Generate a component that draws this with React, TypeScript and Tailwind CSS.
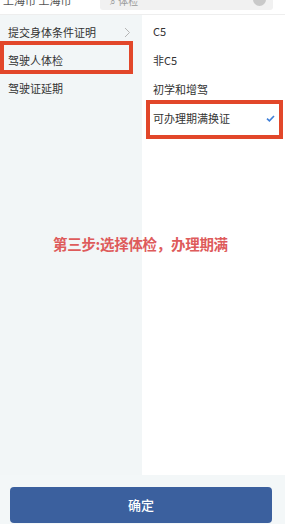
export default function App() {
  return (
    <div
      className="relative w-[300px] h-[524px] bg-white overflow-hidden"
      style={{ fontFamily: '"Noto Sans CJK SC", "Noto Sans", sans-serif' }}
    >
      <div className="w-[285px] h-full flex flex-col">
        {/* header, mostly scrolled off */}
        <div className="h-[15px] overflow-hidden border-b border-[#eeeeee]">
          <div className="-mt-[10px] h-[20px] flex items-center">
            <span className="pl-[3px] text-[11px] text-[#555] w-[100px]">上海市 上海市</span>
            <div className="flex-1 mr-[12px] h-[20px] rounded-[3px] bg-[#f1f1f1] flex items-center px-[10px] relative">
              <span className="text-[10px] text-[#999]">⌕ 体检</span>
              <span className="absolute right-[7px] top-[3px] w-[13px] h-[13px] rounded-full bg-[#c9c9c9]" />
            </div>
          </div>
        </div>

        <div className="flex-1 flex">
          {/* left menu */}
          <div className="w-[142px] bg-[#f2f6f7] pt-[3px] text-[11px] text-[#333]">
            <div className="h-[28px] flex items-center justify-between pl-[8px] pr-[11px]">
              <span>提交身体条件证明</span>
              <svg width="7" height="11" viewBox="0 0 7 11" fill="none">
                <path d="M1 1l4.5 4.5L1 10" stroke="#b5b5b5" strokeWidth="1" />
              </svg>
            </div>
            <div className="h-[28px] flex items-center pl-[8px] relative">
              <span>驾驶人体检</span>
              <div className="absolute left-0 -top-[5px] w-[133px] h-[33px] border-[4px] border-[#e2472a]" />
            </div>
            <div className="h-[28px] flex items-center pl-[8px]">
              <span>驾驶证延期</span>
            </div>
          </div>

          {/* right options */}
          <div className="flex-1 bg-white pt-[2px] text-[11px] text-[#333]">
            <div className="h-[29px] flex items-center pl-[11px]">C5</div>
            <div className="h-[29px] flex items-center pl-[11px]">非C5</div>
            <div className="h-[29px] flex items-center pl-[11px]">初学和增驾</div>
            <div className="h-[29px] flex items-center justify-between pl-[11px] pr-[10px] relative">
              <span>可办理期满换证</span>
              <svg width="9" height="7" viewBox="0 0 9 7" fill="none">
                <path d="M1 3.6l2.4 2.2L8 1" stroke="#3f7fd8" strokeWidth="1.6" />
              </svg>
              <div className="absolute left-[4px] -top-[4px] w-[137px] h-[39px] border-[4px] border-[#e2472a]" />
            </div>
          </div>
        </div>

        <div className="h-[49px] bg-[#f3f7f8] pl-[10px] pt-[12px]">
          <button className="w-[262px] h-[36px] rounded-[4px] bg-[#3b609e] text-white text-[13px] font-medium">
            确定
          </button>
        </div>
      </div>

      <div className="absolute left-[53px] top-[233px] text-[14.5px] font-bold text-[#de5b5b] whitespace-nowrap tracking-[-0.3px]">
        第三步:选择体检，办理期满
      </div>
    </div>
  );
}
